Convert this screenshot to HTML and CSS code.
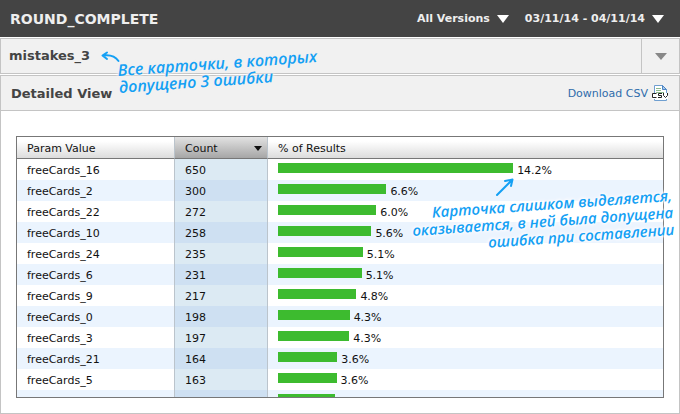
FILE: index.html
```html
<!DOCTYPE html>
<html lang="en">
	<head>
		<meta charset="utf-8">
		<title>ROUND_COMPLETE - Detailed View</title>
		<link rel="stylesheet" href="styles.css">
	</head>
	<body>
		<header class="topbar">
			<h1 class="event-name">ROUND_COMPLETE</h1>
			<button class="top-select" type="button">All Versions
				<svg class="arrow" width="12" height="8" viewBox="0 0 12 8"><path d="M0 0h12L6 8z" fill="#fff"/></svg>
			</button>
			<button class="top-select" type="button">03/11/14 - 04/11/14
				<svg class="arrow" width="12" height="8" viewBox="0 0 12 8"><path d="M0 0h12L6 8z" fill="#fff"/></svg>
			</button>
		</header>

		<section class="param-bar">
			<h2 class="param-name">mistakes_3</h2>
			<button class="param-toggle" type="button" aria-label="Choose parameter">
				<svg width="12" height="7" viewBox="0 0 12 7"><path d="M0 0h12L6 7z" fill="#888"/></svg>
			</button>
		</section>

		<main class="panel">
			<div class="panel-head">
				<h2 class="panel-title">Detailed View</h2>
				<a class="download" href="#csv">Download CSV
					<svg width="18" height="18" viewBox="0 0 18 18" fill="none">
						<path d="M3.500 9V1.500h8l4 4V9M3.500 13v3.500h12V13" fill="#fff" stroke="#6f9fd0"/>
						<path d="M11.500 1.500v4h4z" fill="#a9c9ea" stroke="#4d86c4"/>
						<path d="M5 4.500h5M5 6.500h5M5 8.500h8" stroke="#8dbb8d"/>
						<path d="M1 9h16v6H1z" fill="#fff"/>
						<path d="M5.500 9.500h-4v4h4M11 9.500H7.500v2h3v2H7M12.500 9v2.500l2 2 2-2V9" stroke="#222"/>
					</svg>
				</a>
			</div>
			<div class="panel-body">
				<div class="grid-box">
					<table class="grid">
						<colgroup>
							<col class="col-param">
							<col class="col-count">
							<col>
						</colgroup>
						<thead>
							<tr>
								<th>Param Value</th>
								<th class="count">
									<button class="sort" type="button">Count
										<svg width="8" height="5" viewBox="0 0 8 5"><path d="M0 0h8L4 5z" fill="#111"/></svg>
									</button>
								</th>
								<th>% of Results</th>
							</tr>
						</thead>
						<tbody>
							<tr><td>freeCards_16</td><td class="count">650</td><td><div class="result"><span class="bar" style="width: 62.7%"></span>14.2%</div></td></tr>
							<tr><td>freeCards_2</td><td class="count">300</td><td><div class="result"><span class="bar" style="width: 28.9%"></span>6.6%</div></td></tr>
							<tr><td>freeCards_22</td><td class="count">272</td><td><div class="result"><span class="bar" style="width: 26.2%"></span>6.0%</div></td></tr>
							<tr><td>freeCards_10</td><td class="count">258</td><td><div class="result"><span class="bar" style="width: 24.9%"></span>5.6%</div></td></tr>
							<tr><td>freeCards_24</td><td class="count">235</td><td><div class="result"><span class="bar" style="width: 22.6%"></span>5.1%</div></td></tr>
							<tr><td>freeCards_6</td><td class="count">231</td><td><div class="result"><span class="bar" style="width: 22.3%"></span>5.1%</div></td></tr>
							<tr><td>freeCards_9</td><td class="count">217</td><td><div class="result"><span class="bar" style="width: 20.9%"></span>4.8%</div></td></tr>
							<tr><td>freeCards_0</td><td class="count">198</td><td><div class="result"><span class="bar" style="width: 19.1%"></span>4.3%</div></td></tr>
							<tr><td>freeCards_3</td><td class="count">197</td><td><div class="result"><span class="bar" style="width: 19.0%"></span>4.3%</div></td></tr>
							<tr><td>freeCards_21</td><td class="count">164</td><td><div class="result"><span class="bar" style="width: 15.8%"></span>3.6%</div></td></tr>
							<tr><td>freeCards_5</td><td class="count">163</td><td><div class="result"><span class="bar" style="width: 15.6%"></span>3.6%</div></td></tr>
							<tr><td>freeCards_7</td><td class="count">160</td><td><div class="result"><span class="bar" style="width: 15.3%"></span>3.5%</div></td></tr>
						</tbody>
					</table>
				</div>
			</div>
		</main>

		<!-- handwritten notes over the report -->
		<svg class="note-arrow note-arrow-param" width="20" height="12" viewBox="0 0 20 12"><path d="M17.500 10C14 5 9 3.500 2 4.500M6 1.500L1.500 4.500L6 8" /></svg>
		<p class="note note-param">Все карточки, в которых<br>допущено 3 ошибки</p>
		<svg class="note-arrow note-arrow-row" width="20" height="20" viewBox="0 0 20 20"><path d="M2 18L17 3M10 4L17.500 2.500L16 9" /></svg>
		<p class="note note-row">Карточка слишком выделяется,<br>оказывается, в ней была допущена<br>ошибка при составлении</p>
	</body>
</html>
```
FILE: styles.css
```css
* {
	box-sizing: border-box;
}

body {
	position: relative;
	display: flex;
	flex-direction: column;
	height: 100vh;
	margin: 0;
	overflow: hidden;
	background: #fff;
	color: #111;
	font-family: "DejaVu Sans", sans-serif;
	font-size: 11px;
}

h1, h2, p {
	margin: 0;
}

button {
	border: none;
	padding: 0;
	background: none;
	color: inherit;
	font: inherit;
	cursor: pointer;
}

.topbar {
	display: flex;
	align-items: center;
	gap: 16px;
	height: 37px;
	padding: 0 16px 0 10px;
	background: #444;
	color: #eee;
}

.event-name {
	margin-right: auto;
	font-size: 14px;
}

.top-select {
	display: flex;
	align-items: center;
	gap: 7px;
	font-weight: bold;
}

.param-bar {
	display: flex;
	height: 36px;
	margin: 1px 0;
	border: 1px solid #c4c4c4;
	background: #f1f1f1;
	color: #444;
}

.param-name {
	flex: 1;
	padding-left: 8px;
	font-size: 13px;
	line-height: 34px;
}

.param-toggle {
	width: 38px;
	border-left: 1px solid #c4c4c4;
}

.panel {
	display: flex;
	flex: 1;
	flex-direction: column;
	min-height: 0;
	border: 1px solid #c4c4c4;
}

.panel-head {
	display: flex;
	align-items: center;
	justify-content: space-between;
	height: 35px;
	padding: 0 10px;
	border-bottom: 1px solid #c4c4c4;
	background: #f1f1f1;
}

.panel-title {
	color: #444;
	font-size: 13px;
}

.download {
	display: flex;
	align-items: center;
	gap: 3px;
	color: #2f6cab;
	text-decoration: none;
}

.panel-body {
	flex: 1;
	min-height: 0;
	padding: 25px 15px 15px;
}

.grid-box {
	height: 100%;
	overflow: hidden;
	border: 1px solid #777;
}

.grid {
	width: 100%;
	border-collapse: separate;
	border-spacing: 0;
	table-layout: fixed;
}

.col-param {
	width: 157px;
}

.col-count {
	width: 94px;
}

.grid th {
	height: 22px;
	padding: 1px 10px 0;
	border-bottom: 1px solid #777;
	background: linear-gradient(#fff 20%, #dcdcdc);
	font-weight: normal;
	text-align: left;
}

.grid td {
	height: 21px;
	padding: 2px 10px 0;
}

.grid tbody tr:nth-child(even) {
	background: #ebf4fe;
}

.grid .count {
	border-right: 1px solid #bbc4cc;
	border-left: 1px solid #bbc4cc;
}

.grid th.count {
	padding-right: 5px;
	background: linear-gradient(#e2e2e2, #a6a6a6);
}

.grid td.count {
	background: #dceaf3;
}

.grid tr:nth-child(even) td.count {
	background: #cee0f2;
}

.sort {
	display: flex;
	align-items: center;
	justify-content: space-between;
	width: 100%;
}

.result {
	display: flex;
	align-items: center;
	gap: 4px;
}

.bar {
	height: 10px;
	margin-bottom: 5px;
	background: #3dbb2f;
}

/* notes */

.note {
	position: absolute;
	color: #14a0f4;
	font-family: "Open Sans", sans-serif;
	font-size: 15px;
	font-style: italic;
	font-weight: 600;
	line-height: 17px;
	white-space: nowrap;
	text-shadow: 0 0 3px #fff, 0 0 3px #fff, 0 0 4px #fff, 0 0 6px #fff;
	transform: rotate(-4deg);
}

.note-param {
	top: 55px;
	left: 118px;
	font-size: 16px;
	text-shadow: 0 0 3px #f1f1f1, 0 0 3px #f1f1f1, 0 0 4px #f1f1f1;
}

.note-row {
	top: 196px;
	right: 7px;
	text-align: right;
}

.note-arrow {
	position: absolute;
	fill: none;
	stroke: #14a0f4;
	stroke-width: 2;
	stroke-linecap: round;
	stroke-linejoin: round;
}

.note-arrow-param {
	top: 51px;
	left: 101px;
}

.note-arrow-row {
	top: 177px;
	left: 495px;
}
```
